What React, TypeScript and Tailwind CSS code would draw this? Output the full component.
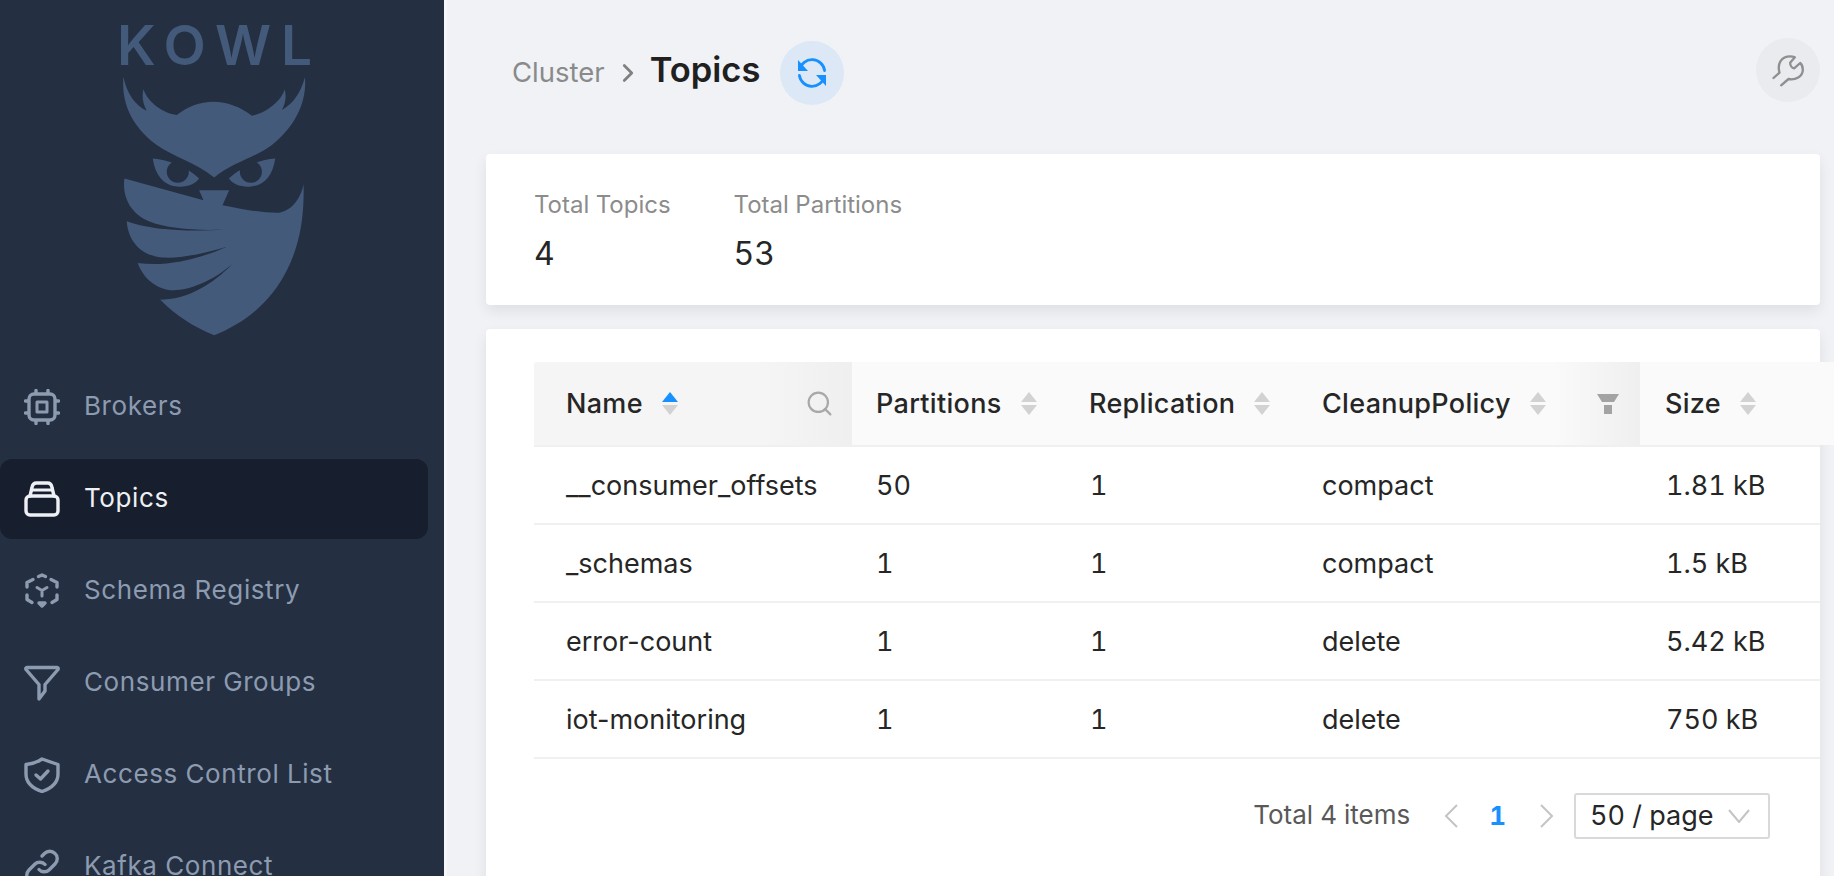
import { ChevronRight, Search } from 'lucide-react';

const inter = { fontFamily: 'Inter, sans-serif' };

const rows = [
  { name: '__consumer_offsets', partitions: '50', replication: '1', policy: 'compact', size: '1.81 kB' },
  { name: '_schemas', partitions: '1', replication: '1', policy: 'compact', size: '1.5 kB' },
  { name: 'error-count', partitions: '1', replication: '1', policy: 'delete', size: '5.42 kB' },
  { name: 'iot-monitoring', partitions: '1', replication: '1', policy: 'delete', size: '750 kB' },
];

function OwlLogo() {
  return (
    <svg viewBox="360 225 560 785" className="ml-[120px] mt-[10px] h-[262px] w-[187px] fill-[#435a7b]">
      {/* head and horns */}
      <path d="M370 230C365 300 385 370 470 435C520 470 590 490 642 532C690 490 770 470 815 435C890 375 920 300 914 232C900 280 880 310 845 330C858 305 858 285 853 268C845 300 800 340 755 347C720 320 680 305 640 305C600 305 560 320 530 345C490 340 445 310 430 268C425 290 428 310 440 332C405 315 380 280 370 230Z" />
      {/* eyes */}
      <path d="M458 475C505 478 560 500 597 535C585 552 560 562 530 559C490 555 465 525 458 475Z" />
      <path d="M825 475C778 478 723 500 686 535C698 552 723 562 753 559C793 555 818 525 825 475Z" />
      <circle cx="533" cy="515" r="33" className="fill-[#242f42]" />
      <circle cx="752" cy="515" r="33" className="fill-[#242f42]" />
      {/* mask, feathers and shield */}
      <path d="M373 535L610 600L597 570L687 570L667 615C720 625 780 638 830 638C870 635 900 600 910 552C912 650 900 730 860 810C810 910 730 970 642 1005C580 980 525 945 480 898C560 900 640 850 695 793C640 840 570 870 520 870C470 868 430 835 413 788C490 800 590 780 678 740C610 760 540 775 490 772C430 768 385 730 380 663C450 690 570 695 670 688C590 692 500 685 450 665C400 645 365 600 373 535Z" />
    </svg>
  );
}

function NavIcon({ name }: { name: string }) {
  const common = {
    viewBox: '0 0 36 36',
    fill: 'none',
    stroke: 'currentColor',
    strokeWidth: 3.4,
    strokeLinecap: 'round' as const,
    strokeLinejoin: 'round' as const,
    className: 'h-[36px] w-[36px] shrink-0',
  };
  if (name === 'Brokers') {
    return (
      <svg {...common}>
        <rect x="5" y="5" width="26" height="26" rx="5" />
        <rect x="13" y="13" width="10" height="10" strokeWidth="3" />
        <path d="M12 1.5V4M24 1.5V4M12 32V34.5M24 32V34.5M1.5 12H4M1.5 24H4M32 12H34.5M32 24H34.5" />
      </svg>
    );
  }
  if (name === 'Topics') {
    return (
      <svg {...common}>
        <rect x="2" y="15" width="32" height="19" rx="4" />
        <path d="M6 15L8 6.5C8.5 3.5 10 2 12.5 2H23.5C26 2 27.5 3.5 28 6.5L30 15" />
        <path d="M8 9H28" strokeWidth="3" />
      </svg>
    );
  }
  if (name === 'Schema Registry') {
    return (
      <svg {...common}>
        <path d="M14.5 3.5L18 2L21.5 3.5M27 6.5L33 9.5V14M33 22V26.5L28 29.5M8 29.5L3 26.5V22M3 14V9.5L9 6.5" />
        <path d="M13 14.5L18 17.5L23 14.5M18 17.5V23" strokeWidth="3" />
        <path d="M15 30L18 33L21 30Z" fill="currentColor" />
      </svg>
    );
  }
  if (name === 'Consumer Groups') {
    return (
      <svg {...common}>
        <path d="M3 2.5H33C34 2.5 34.5 3.5 34 4.5L21 19.5V26L15 34V19.5L2 4.5C1.5 3.5 2 2.5 3 2.5Z" />
      </svg>
    );
  }
  if (name === 'Access Control List') {
    return (
      <svg {...common}>
        <path d="M18 2L34 7.5V17C34 26 27 31.5 18 34.5C9 31.5 2 26 2 17V7.5C7 7 13 5.5 18 2Z" />
        <path d="M12 18L16.5 22L24 14" />
      </svg>
    );
  }
  return (
    <svg {...common}>
      <path d="M15 20.5C17.5 23.5 22.5 23.5 25 21L31 15C34 12 34 7 31 4.5C28 1.5 23.5 1.5 20.5 4.5L18 7" />
      <path d="M21 15.5C18.5 12.5 13.5 12.5 11 15L5 21C2 24 2 29 5 31.5C8 34.5 12.5 34.5 15.5 31.5L18 29" />
    </svg>
  );
}

const navItems = ['Brokers', 'Topics', 'Schema Registry', 'Consumer Groups', 'Access Control List', 'Kafka Connect'];

function Sidebar() {
  return (
    <aside className="h-[876px] w-[444px] shrink-0 overflow-hidden bg-[#242f42]">
      <div className="pt-[25px]">
        <div className="pl-[117px] text-[55px] font-semibold leading-[40px] tracking-[10px] text-[#435a7b]" style={inter}>
          KOWL
        </div>
        <OwlLogo />
      </div>
      <nav className="mt-[30px] flex w-[428px] flex-col gap-[12px]">
        {navItems.map((item) => (
          <div
            key={item}
            className={`flex h-[80px] shrink-0 items-center gap-[24px] rounded-[12px] pl-[24px] text-[26px] tracking-[0.6px] ${
              item === 'Topics' ? 'bg-[#171e2d] text-[#edf0f4]' : 'text-[#8d9bb0]'
            }`}
            style={inter}
          >
            <NavIcon name={item} />
            <span className="-translate-y-[2px]">{item}</span>
          </div>
        ))}
      </nav>
    </aside>
  );
}

function Sorter({ active }: { active?: boolean }) {
  return (
    <span className="ml-[19px] flex flex-col gap-[3px]">
      <svg viewBox="0 0 16 10" className={`h-[10px] w-[16px] ${active ? 'fill-[#1890ff]' : 'fill-[#d2d2d2]'}`}>
        <path d="M8 0L16 10H0Z" />
      </svg>
      <svg viewBox="0 0 16 10" className="h-[10px] w-[16px] fill-[#d2d2d2]">
        <path d="M0 0H16L8 10Z" />
      </svg>
    </span>
  );
}

function TableHead() {
  return (
    <div className="grid h-[83px] w-[1300px] grid-cols-[318px_213px_232px_343px_1fr] bg-[#fafafa] text-[27px] font-medium leading-none tracking-[0.3px] text-[#262626]">
      <div className="flex items-center justify-between rounded-tl-[4px] bg-linear-to-r from-[#f5f5f5] from-[72%] to-[#efefef] pl-[32px] pr-[18px]">
        <span className="flex items-center">
          Name
          <Sorter active />
        </span>
        <Search className="h-[29px] w-[29px] text-[#a8a8a8]" strokeWidth={1.8} />
      </div>
      <div className="flex items-center pl-[24px]">
        Partitions
        <Sorter />
      </div>
      <div className="flex items-center pl-[24px]">
        Replication
        <Sorter />
      </div>
      <div className="flex items-center justify-between bg-linear-to-r from-[#fafafa] from-[75%] to-[#efefef] pl-[25px] pr-[21px]">
        <span className="flex items-center">
          CleanupPolicy
          <Sorter />
        </span>
        <svg viewBox="0 0 22 20" className="h-[20px] w-[22px] fill-[#a3a3a3]">
          <path d="M0 0H22L17 8H5Z" />
          <path d="M7 11H15V20H7Z" />
        </svg>
      </div>
      <div className="flex items-center pl-[25px]">
        Size
        <Sorter />
      </div>
    </div>
  );
}

export default function App() {
  return (
    <div className="flex h-[876px] w-[1834px] overflow-hidden bg-[#f0f2f6] tabular-nums" style={inter}>
      <Sidebar />
      <main className="h-[876px] flex-1 overflow-hidden border-l-[3px] border-[#f6f7f9] pl-[39px] pr-[14px]">
        <header className="flex h-[154px] items-start justify-between">
          <div className="mt-[41px] flex items-center pl-[26px]">
            <span className="text-[27.5px] leading-none text-[#8a8a8a]">Cluster</span>
            <ChevronRight className="ml-[8px] h-[30px] w-[30px] text-[#808080]" strokeWidth={2.2} />
            <span className="ml-[7px] -translate-y-[3px] text-[34.5px] font-semibold leading-none text-[#202020]">Topics</span>
            <button className="ml-[20px] flex h-[64px] w-[64px] items-center justify-center rounded-full bg-[#dce8f6]">
              <svg viewBox="0 0 30 30" fill="none" className="h-[30px] w-[30px] text-[#1890ff]">
                <path d="M2.5 11.5A12.8 12.8 0 0 1 27.6 12.5" stroke="currentColor" strokeWidth="2.8" strokeLinecap="round" />
                <path d="M27.5 18.5A12.8 12.8 0 0 1 2.4 17.5" stroke="currentColor" strokeWidth="2.8" strokeLinecap="round" />
                <path d="M1 2L1 13H11Z" fill="currentColor" />
                <path d="M29 28L29 17H19Z" fill="currentColor" />
              </svg>
            </button>
          </div>
          <button className="mt-[38px] flex h-[64px] w-[64px] items-center justify-center rounded-full bg-[#e9ebee]">
            <svg viewBox="150 95 110 105" fill="none" className="h-[35px] w-[37px]">
              <path
                d="M160 170L178 154C170 125 185 105 210 105C216 105 220 106 224 108L210 124C210 132 215 140 222 141L240 125C246 130 248 138 248 145C248 165 225 178 205 173L183 192"
                stroke="#8f8f8f"
                strokeWidth="7"
                strokeLinecap="round"
                strokeLinejoin="round"
              />
            </svg>
          </button>
        </header>

        <section className="flex h-[151px] gap-[63px] rounded-[4px] bg-white pl-[48px] pt-[37px] shadow-[0_6px_14px_rgba(0,0,0,0.08)]">
          <div>
            <div className="text-[24px] leading-[28px] text-[#8c8c8c]">Total Topics</div>
            <div className="mt-[15px] text-[32px] leading-[40px] text-[#262626]">4</div>
          </div>
          <div>
            <div className="text-[24px] leading-[28px] text-[#8c8c8c]">Total Partitions</div>
            <div className="mt-[15px] text-[32px] leading-[40px] text-[#262626]">53</div>
          </div>
        </section>

        <section className="mt-[24px] h-[560px] rounded-[4px] bg-white pl-[48px] pt-[33px] shadow-[0_6px_14px_rgba(0,0,0,0.08)]">
          <TableHead />
          <div className="border-t-[2px] border-[#f0f0f0]">
            {rows.map((row) => (
              <div
                key={row.name}
                className="grid h-[78px] grid-cols-[318px_213px_232px_343px_1fr] items-center border-b-[2px] border-[#f0f0f0] pt-[2px] text-[27px] text-[#262626]"
              >
                <div className="pl-[32px] normal-nums">{row.name}</div>
                <div className="pl-[24px]">{row.partitions}</div>
                <div className="pl-[25px]">{row.replication}</div>
                <div className="pl-[25px]">{row.policy}</div>
                <div className="pl-[26px]">{row.size}</div>
              </div>
            ))}
          </div>
          <div className="mt-[34px] flex items-center justify-end pr-[50px]">
            <span className="-translate-y-[1px] text-[26px] leading-none text-[#595959]">Total 4 items</span>
            <svg viewBox="0 0 16 26" fill="none" className="ml-[33px] h-[26px] w-[16px]">
              <path d="M14 2L3 13L14 24" stroke="#c4c4c4" strokeWidth="2" />
            </svg>
            <span className="ml-[30px] text-[26px] font-bold leading-none text-[#1890ff]">1</span>
            <svg viewBox="0 0 16 26" fill="none" className="ml-[33px] h-[26px] w-[16px]">
              <path d="M2 2L13 13L2 24" stroke="#c4c4c4" strokeWidth="2" />
            </svg>
            <div className="ml-[19px] flex h-[46px] w-[196px] items-center justify-between rounded-[3px] border-[2px] border-[#d9d9d9] pl-[14px] pr-[18px] text-[27px] text-[#262626]">
              50 / page
              <svg viewBox="0 0 22 14" fill="none" className="h-[14px] w-[22px]">
                <path d="M1 1L11 13L21 1" stroke="#c4c4c4" strokeWidth="2" />
              </svg>
            </div>
          </div>
        </section>
      </main>
    </div>
  );
}
